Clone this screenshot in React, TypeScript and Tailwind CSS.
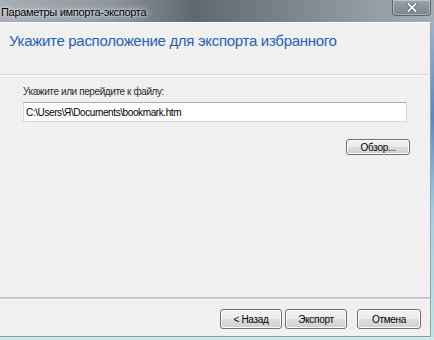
import React from 'react';

const font = { fontFamily: '"Liberation Sans", "Noto Sans", Arial, sans-serif' };

const WinButton: React.FC<{ label: string; className?: string }> = ({ label, className }) => (
    <div
        className={
            "flex items-center justify-center rounded-[3px] border border-[#707070] text-[10px] tracking-[-0.3px] text-black " +
            "bg-[linear-gradient(to_bottom,#f2f2f2_0%,#ebebeb_48%,#dddddd_52%,#cfcfcf_100%)] " +
            "shadow-[inset_0_0_0_1px_#fcfcfc] " +
            (className ?? "")
        }
    >
        {label}
    </div>
);

export default function App() {
    return (
        <div className="w-[434px] h-[340px] flex flex-col overflow-hidden bg-[#c9e6ea]" style={font}>
            {/* glass title bar */}
            <div className="h-[22px] flex items-start bg-[linear-gradient(to_right,#a7aeb5_0%,#8f979f_25%,#5f6870_45%,#737c85_60%,#8e969e_80%,#a4acb4_100%)]">
                <div className="pl-[1px] pt-[5px] text-[11px] leading-[14px] tracking-[-0.3px] text-black [text-shadow:0_0_6px_#e8ecef,0_0_3px_#e8ecef]">
                    Параметры импорта-экспорта
                </div>
                <div className="flex-1" />
                <div className="w-[39px] h-[16px] mr-[3px] rounded-b-[4px] border border-t-0 border-[#5c6670] bg-[linear-gradient(to_bottom,#9aa3ac,#7c858e)] flex items-center justify-center shadow-[inset_0_0_0_1px_rgba(255,255,255,0.35)]">
                    <svg width="10" height="9" viewBox="0 0 10 9">
                        <path d="M1.5 1 L8.5 8 M8.5 1 L1.5 8" stroke="#3a4148" strokeWidth="3" strokeLinecap="square" />
                        <path d="M1.5 1 L8.5 8 M8.5 1 L1.5 8" stroke="#ffffff" strokeWidth="1.8" strokeLinecap="square" />
                    </svg>
                </div>
            </div>

            <div className="flex-1 flex bg-[#8aa0b8]">
                {/* client area */}
                <div className="w-[431px] flex flex-col bg-[#f0f0f0] border-t border-r border-[#ffffff] border-r-[#9aa2aa]">
                    {/* header */}
                    <div className="h-[52px] border-b border-[#d5d5d5] shadow-[0_1px_0_#ffffff] pl-[9px] pt-[9px]">
                        <div className="text-[15px] leading-[18px] tracking-[-0.3px] text-[#1f63b6]">
                            Укажите расположение для экспорта избранного
                        </div>
                    </div>

                    {/* content */}
                    <div className="flex-1 flex flex-col pl-[23px] pr-[22px] pt-[10px]">
                        <div className="text-[10px] leading-[13px] tracking-[-0.4px] text-[#2b2b2b]">Укажите или перейдите к файлу:</div>
                        <div className="mt-[4px] h-[20px] w-[384px] border border-[#d6d9de] border-t-[#abadb3] bg-white flex items-center pl-[2px] text-[10px] tracking-[-0.4px] text-black">
                            C:\Users\Я\Documents\bookmark.htm
                        </div>
                        <div className="flex justify-end mt-[17px]">
                            <WinButton label="Обзор..." className="w-[64px] h-[16px] -mr-[2px]" />
                        </div>
                    </div>

                    {/* footer */}
                    <div className="h-[40px] border-t-2 border-[#c8c8c8] shadow-[inset_0_1px_0_#ffffff] flex items-start justify-end pt-[10px] pr-[9px] border-b border-b-[#9a9a9a]">
                        <WinButton label="< Назад" className="w-[62px] h-[20px]" />
                        <WinButton label="Экспорт" className="w-[62px] h-[20px] ml-[3px]" />
                        <WinButton label="Отмена" className="w-[64px] h-[20px] ml-[10px]" />
                    </div>
                </div>
                {/* right frame */}
                <div className="flex-1 bg-[linear-gradient(to_bottom,#9fb3cc,#5c86c4_30%,#a8cde0_60%,#bfe3e6)]" />
            </div>
            <div className="h-[3px] bg-[#cfe9ea]" />
        </div>
    );
}
